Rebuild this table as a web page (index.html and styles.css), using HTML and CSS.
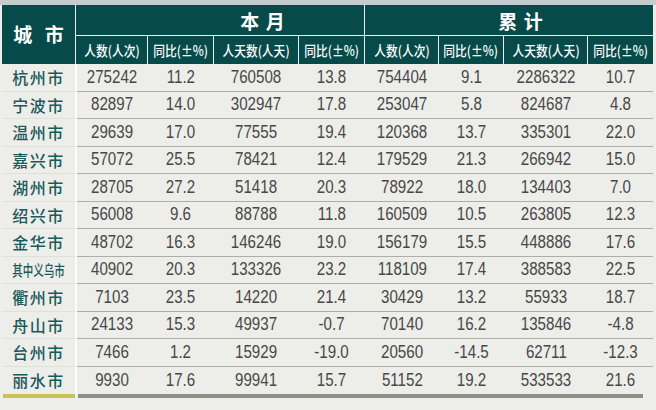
FILE: index.html
```html
<!DOCTYPE html>
<html lang="zh">
<head>
<meta charset="utf-8">
<title>城市统计</title>
<link rel="stylesheet" href="styles.css">
</head>
<body>
<div class="page">
  <div class="topstrip"></div>
  <div class="head">
    <div class="h-city">城 市</div>
    <div class="h-group g1">本 月</div>
    <div class="h-group g2">累 计</div>
    <div class="h-sub"><span>人数(人次)</span></div>
    <div class="h-sub"><span>同比(±%)</span></div>
    <div class="h-sub"><span>人天数(人天)</span></div>
    <div class="h-sub"><span>同比(±%)</span></div>
    <div class="h-sub"><span>人数(人次)</span></div>
    <div class="h-sub"><span>同比(±%)</span></div>
    <div class="h-sub"><span>人天数(人天)</span></div>
    <div class="h-sub"><span>同比(±%)</span></div>
  </div>
  <div class="body">
    <div class="row"><div class="city">杭州市</div><div class="sep"></div><div class="n"><span>275242</span></div><div class="n"><span>11.2</span></div><div class="n"><span>760508</span></div><div class="n"><span>13.8</span></div><div class="n"><span>754404</span></div><div class="n"><span>9.1</span></div><div class="n"><span>2286322</span></div><div class="n"><span>10.7</span></div></div>
    <div class="row"><div class="city">宁波市</div><div class="sep"></div><div class="n"><span>82897</span></div><div class="n"><span>14.0</span></div><div class="n"><span>302947</span></div><div class="n"><span>17.8</span></div><div class="n"><span>253047</span></div><div class="n"><span>5.8</span></div><div class="n"><span>824687</span></div><div class="n"><span>4.8</span></div></div>
    <div class="row"><div class="city">温州市</div><div class="sep"></div><div class="n"><span>29639</span></div><div class="n"><span>17.0</span></div><div class="n"><span>77555</span></div><div class="n"><span>19.4</span></div><div class="n"><span>120368</span></div><div class="n"><span>13.7</span></div><div class="n"><span>335301</span></div><div class="n"><span>22.0</span></div></div>
    <div class="row"><div class="city">嘉兴市</div><div class="sep"></div><div class="n"><span>57072</span></div><div class="n"><span>25.5</span></div><div class="n"><span>78421</span></div><div class="n"><span>12.4</span></div><div class="n"><span>179529</span></div><div class="n"><span>21.3</span></div><div class="n"><span>266942</span></div><div class="n"><span>15.0</span></div></div>
    <div class="row"><div class="city">湖州市</div><div class="sep"></div><div class="n"><span>28705</span></div><div class="n"><span>27.2</span></div><div class="n"><span>51418</span></div><div class="n"><span>20.3</span></div><div class="n"><span>78922</span></div><div class="n"><span>18.0</span></div><div class="n"><span>134403</span></div><div class="n"><span>7.0</span></div></div>
    <div class="row"><div class="city">绍兴市</div><div class="sep"></div><div class="n"><span>56008</span></div><div class="n"><span>9.6</span></div><div class="n"><span>88788</span></div><div class="n"><span>11.8</span></div><div class="n"><span>160509</span></div><div class="n"><span>10.5</span></div><div class="n"><span>263805</span></div><div class="n"><span>12.3</span></div></div>
    <div class="row"><div class="city">金华市</div><div class="sep"></div><div class="n"><span>48702</span></div><div class="n"><span>16.3</span></div><div class="n"><span>146246</span></div><div class="n"><span>19.0</span></div><div class="n"><span>156179</span></div><div class="n"><span>15.5</span></div><div class="n"><span>448886</span></div><div class="n"><span>17.6</span></div></div>
    <div class="row"><div class="city narrow"><span>其中义乌市</span></div><div class="sep"></div><div class="n"><span>40902</span></div><div class="n"><span>20.3</span></div><div class="n"><span>133326</span></div><div class="n"><span>23.2</span></div><div class="n"><span>118109</span></div><div class="n"><span>17.4</span></div><div class="n"><span>388583</span></div><div class="n"><span>22.5</span></div></div>
    <div class="row"><div class="city">衢州市</div><div class="sep"></div><div class="n"><span>7103</span></div><div class="n"><span>23.5</span></div><div class="n"><span>14220</span></div><div class="n"><span>21.4</span></div><div class="n"><span>30429</span></div><div class="n"><span>13.2</span></div><div class="n"><span>55933</span></div><div class="n"><span>18.7</span></div></div>
    <div class="row"><div class="city">舟山市</div><div class="sep"></div><div class="n"><span>24133</span></div><div class="n"><span>15.3</span></div><div class="n"><span>49937</span></div><div class="n"><span>-0.7</span></div><div class="n"><span>70140</span></div><div class="n"><span>16.2</span></div><div class="n"><span>135846</span></div><div class="n"><span>-4.8</span></div></div>
    <div class="row"><div class="city">台州市</div><div class="sep"></div><div class="n"><span>7466</span></div><div class="n"><span>1.2</span></div><div class="n"><span>15929</span></div><div class="n"><span>-19.0</span></div><div class="n"><span>20560</span></div><div class="n"><span>-14.5</span></div><div class="n"><span>62711</span></div><div class="n"><span>-12.3</span></div></div>
    <div class="row last"><div class="city">丽水市</div><div class="sep"></div><div class="n"><span>9930</span></div><div class="n"><span>17.6</span></div><div class="n"><span>99941</span></div><div class="n"><span>15.7</span></div><div class="n"><span>51152</span></div><div class="n"><span>19.2</span></div><div class="n"><span>533533</span></div><div class="n"><span>21.6</span></div></div>
    <div class="foot"><div class="foot-city"></div><div class="foot-gap"></div><div class="foot-data"></div></div>
  </div>
</div>
</body>
</html>
```
FILE: styles.css
```css
html, body {
  margin: 0;
  padding: 0;
}
body {
  background: #ededea;
  width: 656px;
  height: 410px;
  overflow: hidden;
  font-family: "Noto Sans CJK SC", "Liberation Sans", sans-serif;
}
.page {
  display: flex;
  flex-direction: column;
}
.topstrip {
  height: 5px;
  background: #c3cdcd;
}
.head {
  margin-left: 2px;
  width: 651px;
  display: grid;
  grid-template-columns: 73px 71px 65px 84px 65px 73px 64px 83px 65px;
  grid-template-rows: 30px 28px;
  column-gap: 1px;
  row-gap: 1px;
  background: #e8eeee;
}
.head > div {
  background: #064b49;
  color: #fff;
  display: flex;
  align-items: center;
  justify-content: center;
}
.h-city {
  grid-row: 1 / 3;
  font-size: 19px;
  font-weight: 700;
  letter-spacing: 4px;
  padding-left: 4px;
  padding-bottom: 2px;
}
.h-group {
  font-size: 19px;
  font-weight: 700;
  letter-spacing: 1px;
}
.g1 {
  grid-column: 2 / 6;
  padding-left: 86px;
}
.g2 {
  grid-column: 6 / 10;
  padding-left: 24px;
}
.h-sub {
  font-size: 14px;
  font-weight: 500;
}
.h-sub span {
  display: inline-block;
  transform: scaleX(0.84);
  white-space: nowrap;
}
.body {
  margin-left: 2px;
  width: 651px;
}
.row {
  display: grid;
  grid-template-columns: 73px 2px 71px 66px 85px 66px 74px 65px 84px 65px;
  height: 27.5px;
}
.row > div {
  display: flex;
  align-items: center;
  justify-content: center;
}
.city {
  color: #1b5a5a;
  font-size: 16px;
  font-weight: 500;
  letter-spacing: 1.5px;
  border-bottom: 1px solid #e0e0da;
}
.city.narrow {
  letter-spacing: 0;
}
.city.narrow span {
  display: inline-block;
  transform: scaleX(0.7);
  font-size: 15px;
  white-space: nowrap;
}
.sep {
  background: #fbfbf8;
}
.n {
  font-family: "Liberation Sans", sans-serif;
  font-size: 18px;
  color: #484848;
  border-bottom: 1px solid #aeaea8;
}
.n span {
  display: inline-block;
  transform: scaleX(0.84);
  white-space: nowrap;
}
.row.last .n,
.row.last .city {
  border-bottom: none;
}
.foot {
  display: flex;
  height: 4px;
}
.foot-city {
  width: 72px;
  margin-left: 1px;
  background: #cbc255;
}
.foot-gap {
  width: 3px;
}
.foot-data {
  width: 565px;
  background: #8f8f8a;
}
```
